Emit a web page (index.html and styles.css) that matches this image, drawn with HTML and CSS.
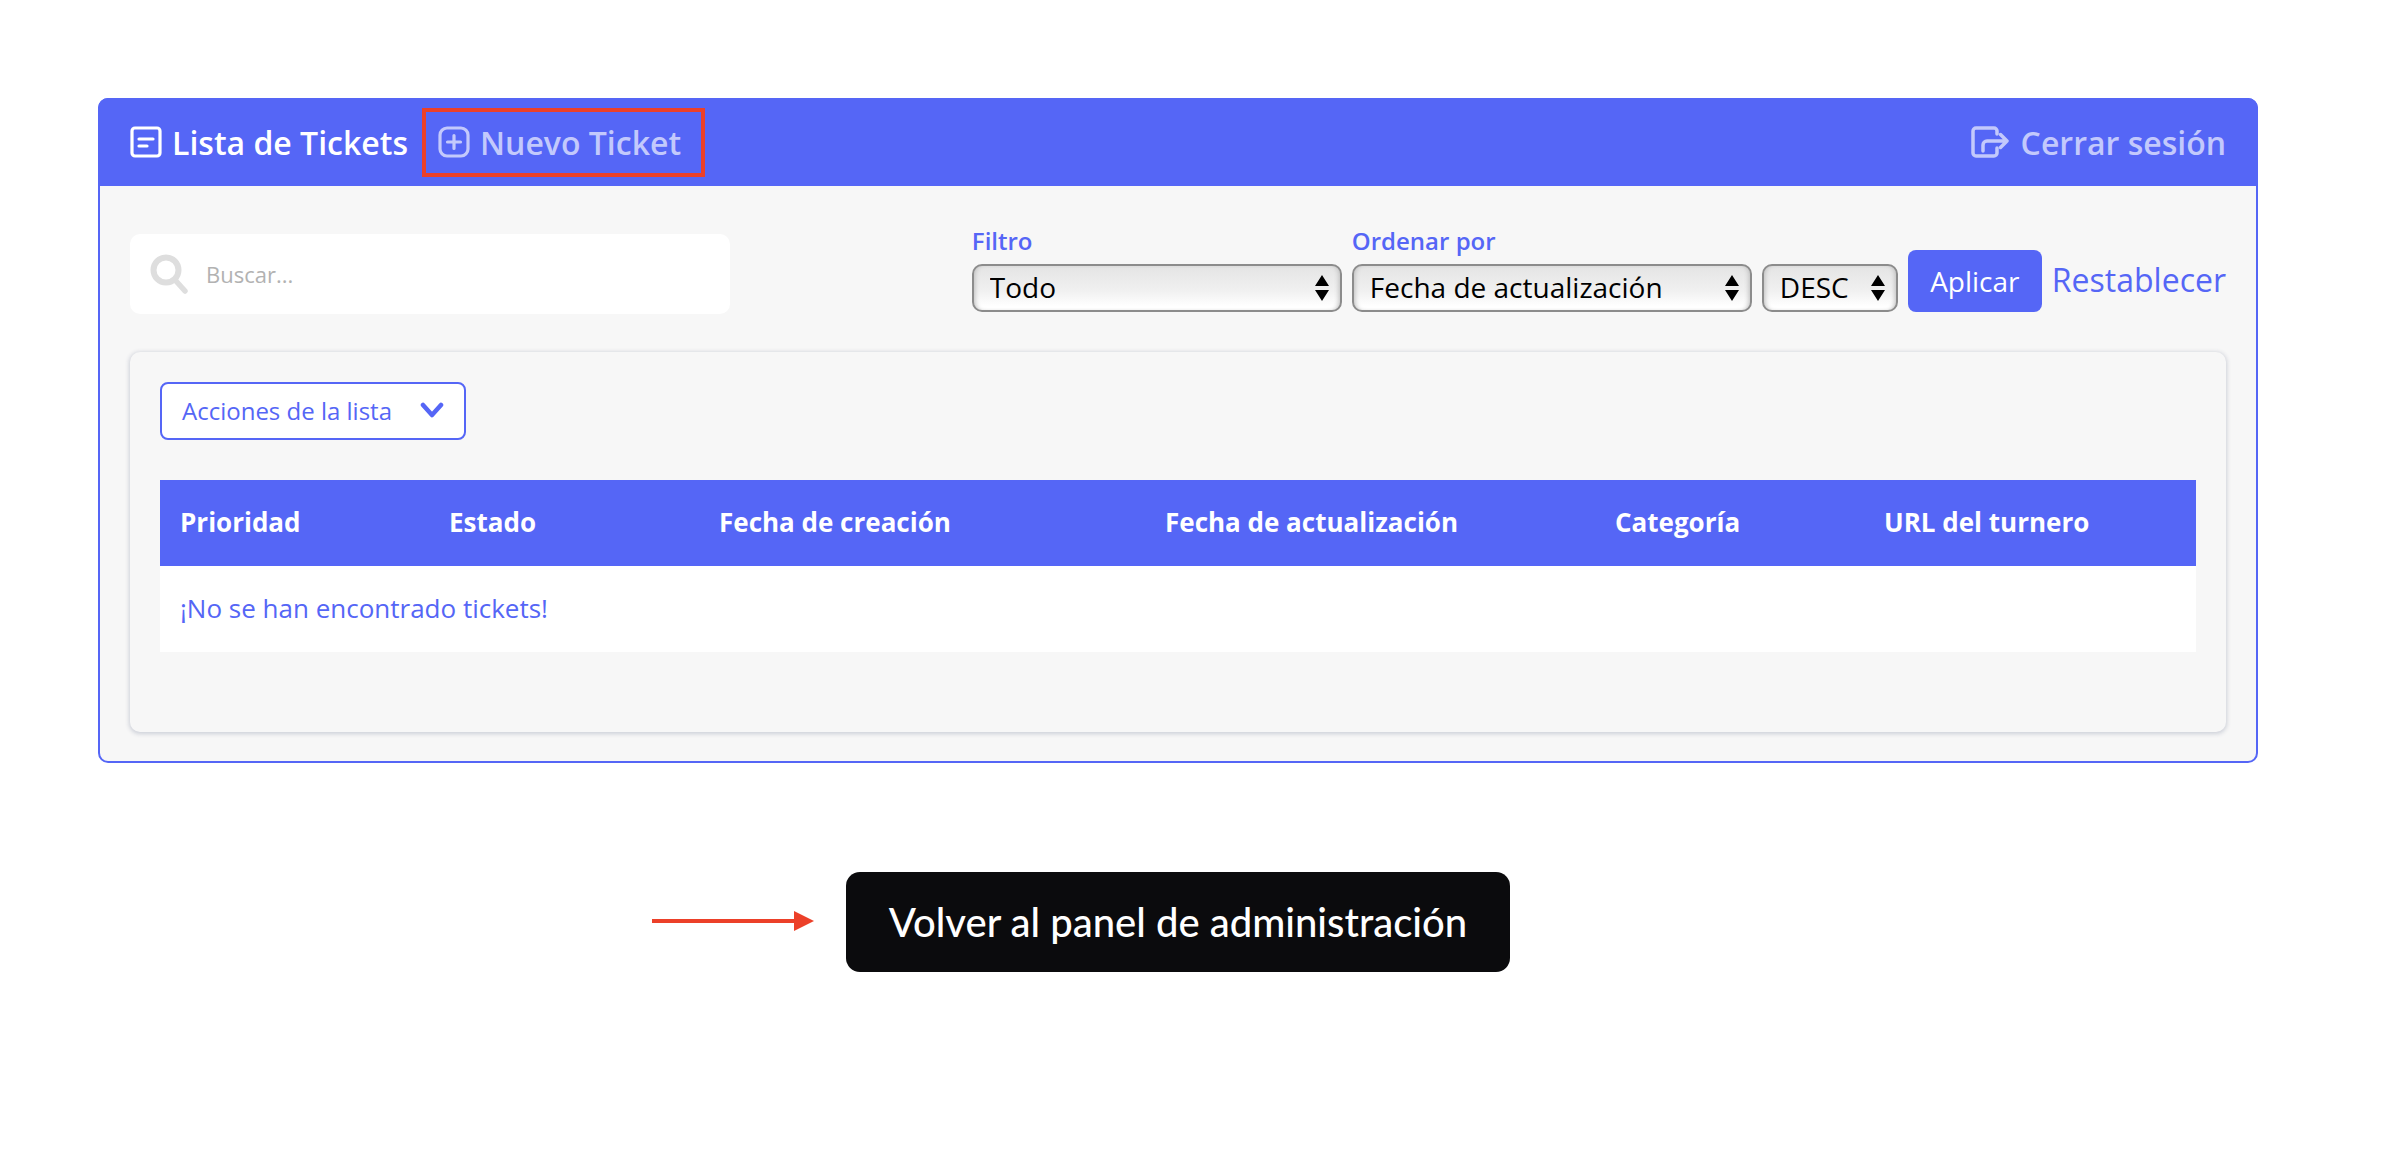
FILE: index.html
```html
<!DOCTYPE html>
<html lang="es">
<head>
    <meta charset="UTF-8">
    <meta name="viewport" content="width=device-width, initial-scale=1.0">
    <title>Lista de Tickets</title>
    <link rel="stylesheet" href="styles.css">
</head>
<body>
    <div class="panel">
        <div class="panel-head">
            <a class="nav-link active">
                <svg class="nav-icon" viewBox="0 0 32 32" fill="none" stroke="currentColor" stroke-width="3.200" stroke-linecap="round">
                    <rect x="2" y="2" width="28" height="28" rx="3"/>
                    <path d="M9 13h14M9 20h8"/>
                </svg>
                Lista de Tickets
            </a>
            <a class="nav-link marked">
                <svg class="nav-icon" viewBox="0 0 32 32" fill="none" stroke="currentColor" stroke-width="3.200" stroke-linecap="round">
                    <rect x="2" y="2" width="28" height="28" rx="7"/>
                    <path d="M16 9.500v13M9.500 16h13"/>
                </svg>
                Nuevo Ticket
            </a>
            <a class="nav-link logout">
                <svg class="logout-icon" viewBox="0 0 38 32" fill="none" stroke="currentColor" stroke-width="3.500" stroke-linecap="round" stroke-linejoin="round">
                    <path d="M26 8V5a3 3 0 0 0-3-3H5a3 3 0 0 0-3 3v22a3 3 0 0 0 3 3h18a3 3 0 0 0 3-3v-5"/>
                    <path d="M12 25v-6a4 4 0 0 1 4-4h20M29.500 8.500L36 15l-6.500 6.500"/>
                </svg>
                Cerrar sesión
            </a>
        </div>

        <div class="panel-body">
            <div class="toolbar">
                <div class="search">
                    <svg class="search-icon" viewBox="0 0 40 40" fill="none" stroke="#dedede" stroke-linecap="round">
                        <circle cx="16" cy="16" r="12.500" stroke-width="6"/>
                        <path d="M26 27l9 10" stroke-width="5.500"/>
                    </svg>
                    <input class="search-input" type="text" placeholder="Buscar...">
                </div>
                <div class="filters">
                    <div class="field">
                        <label class="field-label">Filtro</label>
                        <div class="select-box w-filter">
                            <select class="select"><option>Todo</option></select>
                            <svg class="select-arrows" viewBox="0 0 14 26"><path d="M7 0l7 11H0zM7 26l7-11H0z"/></svg>
                        </div>
                    </div>
                    <div class="field">
                        <label class="field-label">Ordenar por</label>
                        <div class="select-box w-order">
                            <select class="select"><option>Fecha de actualización</option></select>
                            <svg class="select-arrows" viewBox="0 0 14 26"><path d="M7 0l7 11H0zM7 26l7-11H0z"/></svg>
                        </div>
                    </div>
                    <div class="select-box w-dir">
                        <select class="select"><option>DESC</option></select>
                        <svg class="select-arrows" viewBox="0 0 14 26"><path d="M7 0l7 11H0zM7 26l7-11H0z"/></svg>
                    </div>
                    <button class="apply">Aplicar</button>
                    <a class="reset">Restablecer</a>
                </div>
            </div>

            <div class="card">
                <div class="actions">
                    Acciones de la lista
                    <svg class="actions-icon" viewBox="0 0 24 16" fill="none" stroke="currentColor" stroke-width="4.500" stroke-linecap="round" stroke-linejoin="round"><path d="M3 3l9 10 9-10"/></svg>
                </div>
                <table class="tickets">
                    <thead>
                        <tr>
                            <th>Prioridad</th>
                            <th>Estado</th>
                            <th>Fecha de creación</th>
                            <th>Fecha de actualización</th>
                            <th>Categoría</th>
                            <th>URL del turnero</th>
                        </tr>
                    </thead>
                    <tbody>
                        <tr>
                            <td colspan="6">¡No se han encontrado tickets!</td>
                        </tr>
                    </tbody>
                </table>
            </div>
        </div>
    </div>

    <div class="back-row">
        <svg class="back-arrow" viewBox="0 0 162 20"><path d="M0 8h146v4H0z"/><path d="M142 0l20 10-20 10z"/></svg>
        <a class="back-btn">Volver al panel de administración</a>
    </div>
</body>
</html>
```

FILE: styles.css
```css
* {
    box-sizing: border-box;
}

body {
    margin: 0;
    background-color: #fff;
    font-family: "Open Sans", "Noto Sans", sans-serif;
}

.panel {
    width: 2160px;
    height: 665px;
    margin: 98px 0 0 98px;
    border: 2px solid #5566f6;
    border-radius: 10px;
    background-color: #f7f7f7;
}

.panel-head {
    display: flex;
    align-items: center;
    height: 88px;
    margin: -2px -2px 0;
    padding: 0 32px;
    border-radius: 10px 10px 0 0;
    background-color: #5566f6;
}

.nav-link {
    display: flex;
    align-items: center;
    gap: 10px;
    font-size: 32px;
    font-weight: 600;
    color: #c3c9fc;
}

.nav-link.active {
    color: #fff;
}

.nav-link.marked {
    height: 69px;
    margin-left: 14px;
    padding: 0 20px 0 12px;
    border: 4px solid #ec4029;
}

.nav-link.logout {
    gap: 12px;
    margin-left: auto;
}

.nav-icon {
    width: 32px;
    height: 32px;
}

.logout-icon {
    width: 38px;
    height: 32px;
}

.panel-body {
    padding: 48px 30px 0;
}

.toolbar {
    display: flex;
    justify-content: space-between;
}

.search {
    display: flex;
    align-items: center;
    gap: 14px;
    width: 600px;
    height: 80px;
    padding-left: 20px;
    border-radius: 10px;
    background-color: #fff;
}

.search-icon {
    width: 40px;
    height: 40px;
}

.search-input {
    flex: 1;
    border: none;
    outline: none;
    font-family: inherit;
    font-size: 22px;
    color: #555;
}

.search-input::placeholder {
    color: #b2b2b2;
}

.filters {
    display: flex;
    align-items: flex-end;
    gap: 10px;
    height: 78px;
}

.field {
    display: flex;
    flex-direction: column;
    gap: 8px;
}

.field-label {
    font-size: 24px;
    font-weight: 600;
    line-height: 31px;
    color: #5566f6;
}

.select-box {
    position: relative;
    height: 48px;
}

.w-filter {
    width: 370px;
}

.w-order {
    width: 400px;
}

.w-dir {
    width: 136px;
}

.select {
    width: 100%;
    height: 100%;
    padding: 0 0 2px 16px;
    appearance: none;
    border: 2px solid #8c8c8c;
    border-radius: 10px;
    background: linear-gradient(#e4e4e4, #f0f0f0 55%, #fff 92%);
    box-shadow: inset 4px 0 5px -3px #bbb, inset -4px 0 5px -3px #bbb;
    font-family: inherit;
    font-size: 28px;
    color: #000;
}

.select-arrows {
    position: absolute;
    top: 11px;
    right: 13px;
    width: 14px;
    height: 26px;
}

.apply {
    width: 134px;
    height: 62px;
    border: none;
    border-radius: 8px;
    background-color: #5566f6;
    font-family: inherit;
    font-size: 28px;
    color: #fff;
}

.reset {
    align-self: flex-end;
    margin-bottom: 10px;
    font-size: 32px;
    line-height: 44px;
    color: #5566f6;
}

.card {
    height: 380px;
    margin-top: 38px;
    padding: 30px 30px 0;
    border-radius: 10px;
    background-color: #f7f7f7;
    box-shadow: 0 1px 4px 1px #cdd0d8;
}

.actions {
    display: flex;
    align-items: center;
    justify-content: space-between;
    width: 306px;
    height: 58px;
    padding: 0 20px 2px;
    border: 2px solid #5566f6;
    border-radius: 8px;
    background-color: #fff;
    font-size: 24px;
    color: #5566f6;
}

.actions-icon {
    width: 24px;
    height: 16px;
}

.tickets {
    width: 2036px;
    margin-top: 40px;
    border-collapse: collapse;
    table-layout: fixed;
    background-color: #fff;
}

.tickets th {
    height: 86px;
    padding: 0 0 2px 20px;
    background-color: #5566f6;
    font-size: 26px;
    font-weight: 700;
    text-align: left;
    color: #fff;
}

.tickets th:nth-child(1) {
    width: 269px;
}

.tickets th:nth-child(2) {
    width: 270px;
}

.tickets th:nth-child(3) {
    width: 446px;
}

.tickets th:nth-child(4) {
    width: 450px;
}

.tickets th:nth-child(5) {
    width: 269px;
}

.tickets td {
    height: 86px;
    padding: 0 0 2px 20px;
    font-size: 26px;
    color: #5566f6;
}

.back-row {
    display: flex;
    align-items: center;
    margin: 109px 0 0 652px;
}

.back-arrow {
    width: 162px;
    height: 20px;
    margin: 0 32px 2px 0;
    fill: #ec4029;
}

.back-btn {
    display: flex;
    align-items: center;
    justify-content: center;
    width: 664px;
    height: 100px;
    border-radius: 14px;
    background-color: #0b0b0d;
    font-family: "Lato", sans-serif;
    font-size: 40px;
    font-weight: 500;
    color: #fff;
}
```
